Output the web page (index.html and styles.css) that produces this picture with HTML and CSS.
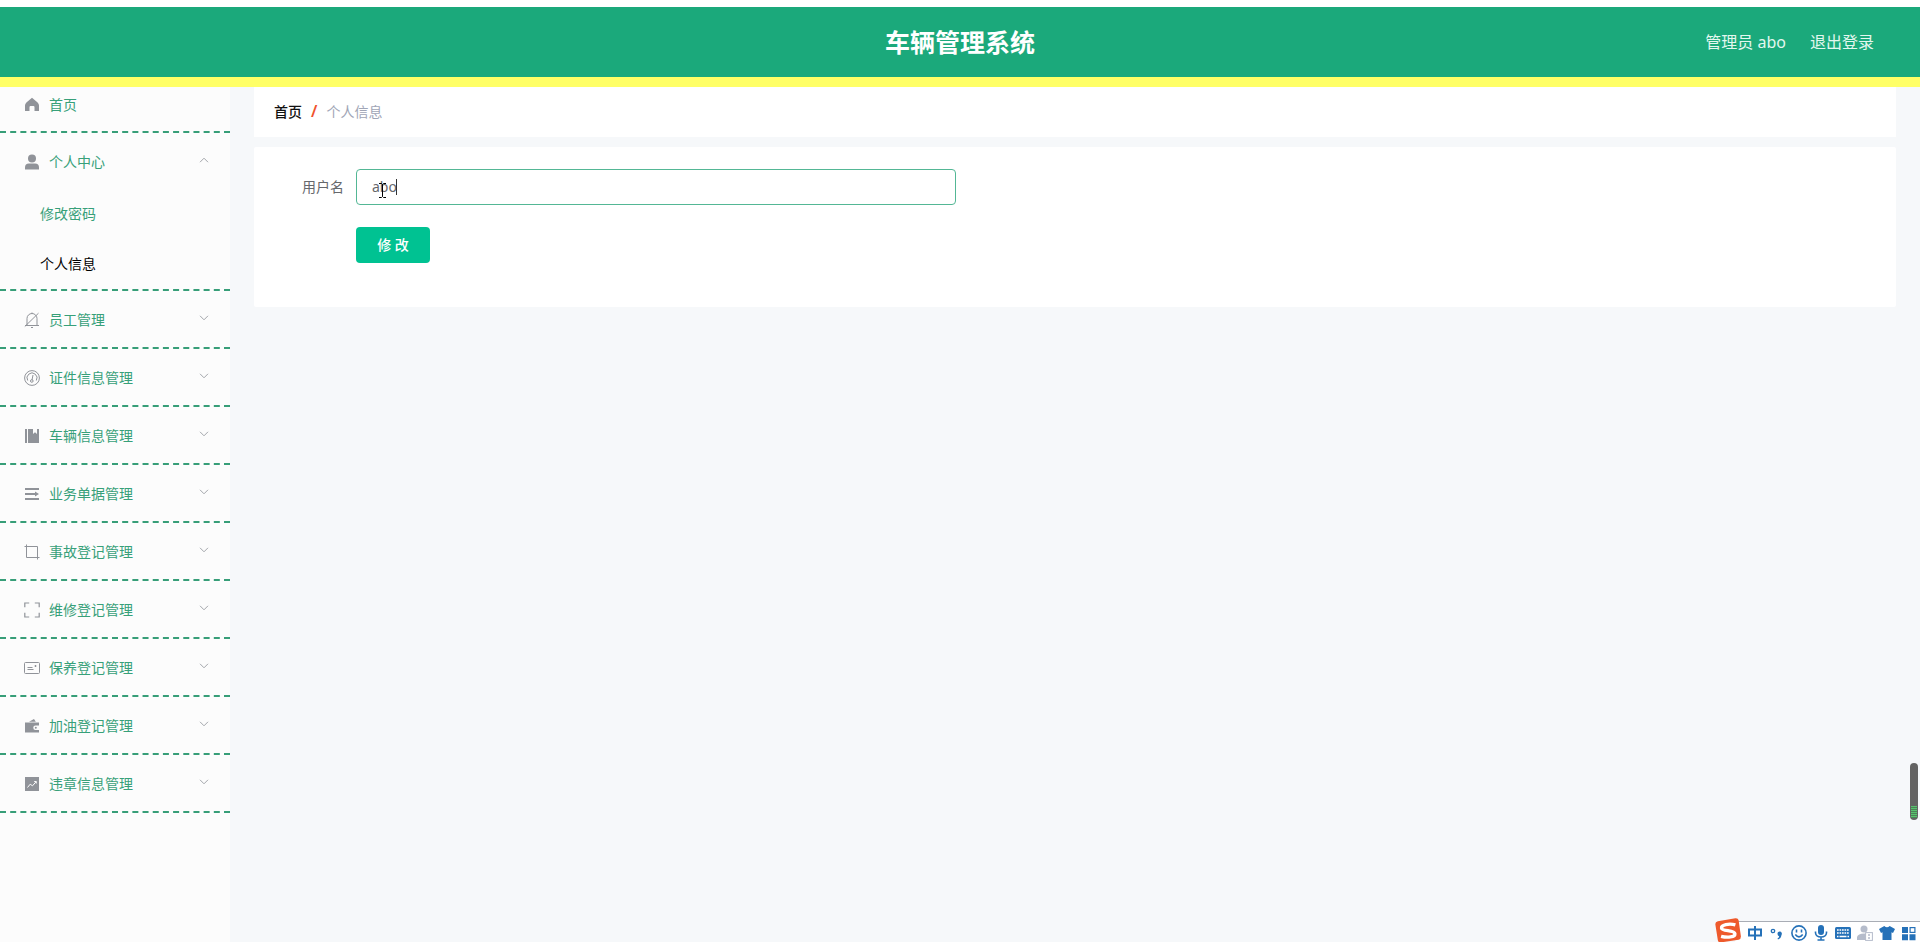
FILE: index.html
```html
<!DOCTYPE html>
<html lang="zh-CN">
<head>
<meta charset="utf-8">
<title>车辆管理系统</title>
<link rel="stylesheet" href="styles.css">
</head>
<body>
<svg class="sprite" aria-hidden="true">
  <symbol id="chevron" viewBox="0 0 10 6"><path d="M1 .8 5 4.8 9 .8" fill="none" stroke="currentColor"/></symbol>
</svg>
<header class="topbar">
  <h1 class="topbar-title">车辆管理系统</h1>
  <div class="topbar-user">
    <span>管理员 abo</span>
    <a href="#">退出登录</a>
  </div>
</header>
<div class="layout">
  <nav class="sidebar">
    <div class="group group-home">
      <a class="item" href="#">
        <svg class="icon" viewBox="0 0 16 16"><path fill="currentColor" d="M8 .8 13.6 5.6Q15 7 15 8.6V14H10.500V10.200Q10.500 9 9.500 9H6.500Q5.500 9 5.500 10.200V14H1V8.600Q1 7 2.400 5.600z"/></svg>
        <span>首页</span>
      </a>
    </div>
    <div class="group">
      <button class="item" type="button">
        <svg class="icon" viewBox="0 0 16 16"><circle cx="8" cy="4.500" r="4" fill="currentColor"/><path fill="currentColor" d="M1 15.500V13.500Q1 9.500 5 9.500H11Q15 9.500 15 13.500V15.500z"/></svg>
        <span>个人中心</span>
        <svg class="arrow arrow-open"><use href="#chevron"/></svg>
      </button>
      <a class="subitem" href="#">修改密码</a>
      <a class="subitem subitem-active" href="#">个人信息</a>
    </div>
    <div class="group">
      <button class="item" type="button">
        <svg class="icon" viewBox="0 0 16 16" fill="none" stroke="currentColor"><path d="M3 13.500V6.500A5 5 0 0 1 13 6.500V13.500M1 13.500H15M8 .5V1.500M7 15.500H9M.8 14.500 14.500 1.200"/></svg>
        <span>员工管理</span>
        <svg class="arrow"><use href="#chevron"/></svg>
      </button>
    </div>
    <div class="group">
      <button class="item" type="button">
        <svg class="icon" viewBox="0 0 16 16" fill="none" stroke="currentColor"><circle cx="8" cy="8" r="7.400"/><path d="M3.700 10.500A5 5 0 1 1 12.300 10.500M9 5 8 10"/><circle cx="7.800" cy="11" r="1.300"/></svg>
        <span>证件信息管理</span>
        <svg class="arrow"><use href="#chevron"/></svg>
      </button>
    </div>
    <div class="group">
      <button class="item" type="button">
        <svg class="icon" viewBox="0 0 16 16" fill="currentColor"><path d="M1 1H3V15H1zM4 1H9V6L11 4.300 13 6V1H15V15H4z"/></svg>
        <span>车辆信息管理</span>
        <svg class="arrow"><use href="#chevron"/></svg>
      </button>
    </div>
    <div class="group">
      <button class="item" type="button">
        <svg class="icon" viewBox="0 0 16 16" fill="currentColor"><path d="M1 2H15V4H1zM1 7H11V5.500L15 8 11 10.500V9H1zM1 12H15V14H1z"/></svg>
        <span>业务单据管理</span>
        <svg class="arrow"><use href="#chevron"/></svg>
      </button>
    </div>
    <div class="group">
      <button class="item" type="button">
        <svg class="icon" viewBox="0 0 16 16" fill="none" stroke="currentColor"><path d="M.5 2.500H13.500V15.500M2.500 .5V13.500H15.500"/></svg>
        <span>事故登记管理</span>
        <svg class="arrow"><use href="#chevron"/></svg>
      </button>
    </div>
    <div class="group">
      <button class="item" type="button">
        <svg class="icon" viewBox="0 0 16 16" fill="none" stroke="currentColor" stroke-width="1.200"><path d="M.8 5.200V1H5.200M10.800 1H15.200V5.200M15.200 10.800V15H10.800M5.200 15H.8V10.800"/></svg>
        <span>维修登记管理</span>
        <svg class="arrow"><use href="#chevron"/></svg>
      </button>
    </div>
    <div class="group">
      <button class="item" type="button">
        <svg class="icon" viewBox="0 0 16 16" fill="none" stroke="currentColor"><rect x=".5" y="2.500" width="15" height="11" rx="1"/><path d="M3.500 7.500H8.500M3.500 9.500H9.500"/><path fill="currentColor" d="M11 5.500H12V6.500H11z"/></svg>
        <span>保养登记管理</span>
        <svg class="arrow"><use href="#chevron"/></svg>
      </button>
    </div>
    <div class="group">
      <button class="item" type="button">
        <svg class="icon" viewBox="0 0 16 16" fill="currentColor"><path d="M1 4.500H15V7.500H11.500A2.200 2.200 0 0 0 11.500 12H15V14.500H1zM5 3.800 10 1 11.800 3.800z"/><circle cx="11.800" cy="9.700" r="1"/></svg>
        <span>加油登记管理</span>
        <svg class="arrow"><use href="#chevron"/></svg>
      </button>
    </div>
    <div class="group">
      <button class="item" type="button">
        <svg class="icon" viewBox="0 0 16 16"><path fill="currentColor" d="M1 1H15V15H1z"/><path d="M3.500 11.500 6.200 8.200 8.500 9.800 12 5.800M10.200 5.500H12.300V7.500" fill="none" stroke="#fcfcfc"/></svg>
        <span>违章信息管理</span>
        <svg class="arrow"><use href="#chevron"/></svg>
      </button>
    </div>
  </nav>
  <main class="content">
    <nav class="breadcrumb">
      <a href="#">首页</a><span class="separator">/</span><span class="current">个人信息</span>
    </nav>
    <form class="panel">
      <div class="field">
        <label for="username">用户名</label>
        <div class="control">
          <input id="username" type="text" value="abo" autocomplete="off">
          <span class="caret"></span>
          <svg class="pointer" viewBox="0 0 7 15"><path d="M0 .5H2.500L3.500 1.500 4.500 .5H7M3.500 1.500V13.500M0 14.500H2.500L3.500 13.500 4.500 14.500H7" fill="none" stroke="#000"/></svg>
        </div>
      </div>
      <button class="submit" type="button">修 改</button>
    </form>
  </main>
</div>
<div class="level"><div class="level-fill"></div></div>
<div class="ime">
  <svg class="ime-logo" viewBox="0 0 28 26"><path fill="#ee5a2c" d="M3 3.500 22 .3Q25 0 25.500 2.500L28 20Q28 23 25.500 23.500L6 26.500Q3.300 26.500 3 24L.3 7Q0 4.200 3 3.500z"/><path d="M22 7.500C15 5.500 6.500 7.500 7 11S21 13 21.500 17 13 21.500 6.500 19.800" fill="none" stroke="#fff" stroke-width="3.600"/></svg>
  <button type="button" aria-label="中文"><svg viewBox="0 0 16 16" fill="none" stroke="currentColor" stroke-width="2"><path d="M2 4.500H14V10.500H2zM8 1V15"/></svg></button>
  <button type="button" aria-label="标点"><svg viewBox="0 0 16 16"><circle cx="4" cy="6" r="1.700" fill="none" stroke="currentColor" stroke-width="1.300"/><path fill="currentColor" d="M8.500 9A2.200 2.200 0 1 1 12.500 10Q12 13.500 9 14.500L8.500 13.500Q10.200 12.500 10.200 11.200Q8.600 10.700 8.500 9z"/></svg></button>
  <button type="button" aria-label="表情"><svg viewBox="0 0 16 16" fill="none" stroke="currentColor" stroke-width="1.600"><circle cx="8" cy="8" r="7.100"/><path d="M5.500 4.500V7.500M10.500 4.500V7.500M4.300 9.500Q8 14.300 11.700 9.500"/></svg></button>
  <button type="button" aria-label="语音"><svg viewBox="0 0 16 16"><rect x="5" y="0" width="6" height="10" rx="3" fill="currentColor"/><path d="M2.500 6.500V8Q3 12 8 12T13.500 8V6.500M8 12V15M4.500 15H11.500" fill="none" stroke="currentColor" stroke-width="1.600"/></svg></button>
  <button type="button" aria-label="键盘"><svg viewBox="0 0 16 16"><rect x="0" y="2" width="16" height="12" rx="1.500" fill="currentColor"/><path d="M2 5H14M2 8H14" stroke="#fff" stroke-width="1.700" stroke-dasharray="1.700 .8"/><path d="M2 11.500H3.500M4.500 11.500H11.500M12.500 11.500H14" stroke="#fff" stroke-width="1.500"/></svg></button>
  <button type="button" class="ime-muted" aria-label="账号"><svg viewBox="0 0 16 16"><circle cx="7" cy="4" r="3.500" fill="currentColor"/><path fill="currentColor" d="M0 15V12Q1 8.500 7 8.500T13 12V15z"/><rect x="8.600" y="7.600" width="6.800" height="7.800" fill="#fff" stroke="currentColor"/><path d="M11 10H13M11 13H13" stroke="currentColor" stroke-width="1.300"/></svg></button>
  <button type="button" aria-label="皮肤"><svg viewBox="0 0 16 16"><path fill="currentColor" d="M5.300 1Q8 3.500 10.700 1L16 4 14 8 12.500 7.300V15H3.500V7.300L2 8 0 4z"/></svg></button>
  <button type="button" aria-label="工具箱"><svg viewBox="0 0 16 16"><path fill="currentColor" d="M1 2H7V8H1zM1 9.300H7V15.300H1zM8.500 9.300H14.500V15.300H8.500z"/><rect x="9.100" y="2.600" width="4.800" height="4.800" fill="none" stroke="currentColor" stroke-width="1.200"/></svg></button>
</div>
</body>
</html>
```
FILE: styles.css
```css
* { box-sizing: border-box; }

body {
  margin: 0;
  min-height: 100vh;
  display: flex;
  flex-direction: column;
  background: #f6f8fa;
  font-family: "Noto Sans", "Noto Sans CJK SC", sans-serif;
  font-size: 14px;
  color: #66686c;
}

a { color: inherit; text-decoration: none; }
button { font: inherit; border: 0; cursor: pointer; }
.sprite { display: none; }

.topbar {
  display: grid;
  grid-template-columns: 1fr auto 1fr;
  align-items: center;
  height: 87px;
  border-top: 7px solid #fff;
  border-bottom: 10px solid #ff6;
  background: #1ba97b;
  color: #fff;
}
.topbar-title { grid-column: 2; margin: 0; font-size: 25px; line-height: 36px; }
.topbar-user {
  display: flex;
  justify-content: flex-end;
  gap: 24px;
  padding: 0 46px 2px 0;
  font-size: 16px;
  color: #e3f7ef;
}

.layout { flex: 1; display: flex; }

.sidebar { flex: 0 0 230px; background: #fcfcfc; color: #37a079; }
.group { border-bottom: 2px dashed #379e78; }
.item {
  display: flex;
  align-items: center;
  width: 100%;
  height: 56px;
  padding: 0 21px 0 24px;
  background: none;
  color: inherit;
  text-align: left;
}
.group-home .item { height: 44px; padding-bottom: 10px; }
.icon { flex: none; width: 16px; height: 16px; margin: 2px 9px 0 0; color: #909399; }
.arrow { width: 10px; height: 6px; margin: 0 0 2px auto; color: #a3a6ab; }
.arrow-open { transform: rotate(180deg); }
.subitem { display: block; padding-left: 40px; line-height: 50px; }
.subitem-active { color: #000; }

.content {
  flex: 1;
  display: flex;
  flex-direction: column;
  gap: 10px;
  padding: 0 24px;
}
.breadcrumb {
  display: flex;
  align-items: center;
  height: 50px;
  padding: 0 20px 2px;
  background: #fff;
  color: #222;
}
.breadcrumb a { font-weight: 500; color: #111; }
.separator { margin: 0 9px; font-size: 16px; font-weight: 600; color: #f0522d; }
.current { color: #a0a5b6; }

.panel { padding: 22px 20px 44px; background: #fff; border-radius: 2px; }
.field { display: flex; align-items: center; margin-bottom: 22px; }
.field label { width: 82px; padding: 0 12px 2px 0; text-align: right; }
.control { position: relative; flex: 0 1 600px; }
.control input {
  display: block;
  width: 100%;
  height: 36px;
  padding: 0 15px 2px;
  border: 1px solid #53b795;
  border-radius: 4px;
  background: #fff;
  font: inherit;
  color: #66686c;
  outline: 0;
}
.caret { position: absolute; left: 40px; top: 10px; width: 1px; height: 16px; background: #333; }
.pointer { position: absolute; left: 23px; top: 14px; width: 7px; height: 15px; }
.submit {
  display: block;
  width: 74px;
  height: 36px;
  margin-left: 82px;
  padding: 0 0 2px;
  border-radius: 4px;
  background: #00c292;
  color: #fff;
  font-weight: 500;
}

.level {
  position: fixed;
  right: 2px;
  bottom: 122px;
  width: 8px;
  height: 57px;
  padding: 43px 1px 2px;
  border-radius: 4px;
  background: #636363;
}
.level-fill { height: 12px; background: repeating-linear-gradient(#57c26e 0 1px, #4b8257 1px 2px); }

.ime {
  position: fixed;
  right: 0;
  bottom: 0;
  display: flex;
  height: 21px;
  padding-left: 9px;
  border-top: 1px solid #a9adb5;
  background: #fff;
  color: #2571b8;
}
.ime button { display: grid; place-items: center; width: 22px; padding: 2px 0 0; background: none; color: inherit; }
.ime button svg { width: 16px; height: 16px; }
.ime .ime-muted { color: #b5bccb; }
.ime-logo { position: absolute; left: -21px; bottom: 0; width: 28px; height: 24px; }
```
